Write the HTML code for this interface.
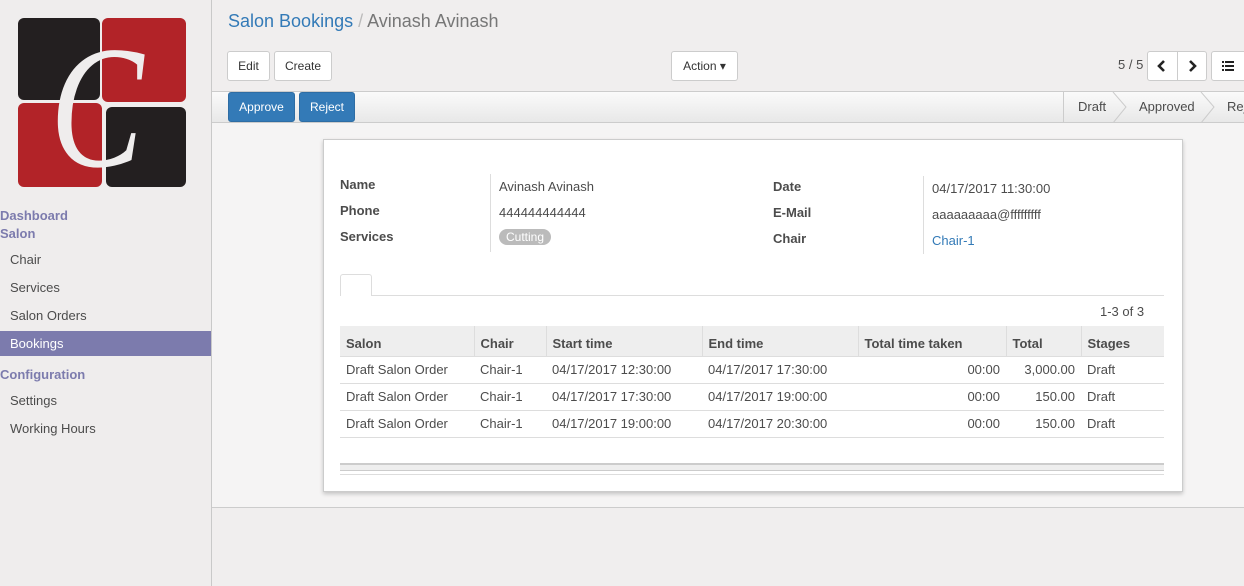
<!DOCTYPE html><html><head><style>
*{box-sizing:border-box;margin:0;padding:0}
body{width:1244px;height:586px;overflow:hidden;background:#f0eeee;font-family:"Liberation Sans",sans-serif;font-size:13px;color:#4c4c4c;position:relative}
.a{position:absolute}
.side{left:0;top:0;width:212px;height:586px;background:#efeded;border-right:1px solid #c9c9c9}
.cat{left:0;font-weight:bold;color:#7c7bad;font-size:13px}
.item{left:10px;color:#4c4c4c}
.btn{background:#fff;border:1px solid #ccc;border-radius:3px;height:30px;line-height:28px;text-align:center;font-size:12px;color:#333}
.bp{background:#337ab7;border:1px solid #2e6da4;color:#fff;border-radius:3px;height:30px;line-height:28px;text-align:center;font-size:12px}
.lbl{font-weight:bold;color:#4c4c4c}
table{border-collapse:collapse;font-size:13px}
td,th{text-align:left;padding:0 6px;height:27px;border-bottom:1px solid #ddd}
th{background:#eee;height:30px;padding-top:5px;border-left:1px solid #ddd}
th:first-child{border-left:0}
.r{text-align:right}
</style></head><body>
<div class="a side"></div>
<div class="a" style="left:18px;top:18px;width:82px;height:82px;background:#231f20;border-radius:6px"></div>
<div class="a" style="left:102px;top:18px;width:84px;height:84px;background:#b22328;border-radius:6px"></div>
<div class="a" style="left:18px;top:103px;width:84px;height:84px;background:#b22328;border-radius:6px"></div>
<div class="a" style="left:106px;top:107px;width:80px;height:80px;background:#231f20;border-radius:6px"></div>
<div class="a" style="left:50px;top:12px;font-family:'Liberation Serif',serif;font-style:italic;font-size:175px;line-height:190px;color:#efeded;transform:scaleX(0.8);transform-origin:left top">C</div>
<div class="a cat" style="top:208px">Dashboard</div>
<div class="a cat" style="top:226px">Salon</div>
<div class="a item" style="top:252px">Chair</div>
<div class="a item" style="top:280px">Services</div>
<div class="a item" style="top:308px">Salon Orders</div>
<div class="a" style="left:0;top:331px;width:211px;height:25px;background:#7c7bad"></div>
<div class="a item" style="top:336px;color:#fff">Bookings</div>
<div class="a cat" style="top:367px">Configuration</div>
<div class="a item" style="top:393px">Settings</div>
<div class="a item" style="top:421px">Working Hours</div>

<div class="a" style="left:228px;top:11px;font-size:18px;color:#337ab7">Salon Bookings<span style="color:#bbb"> / </span><span style="color:#777"> Avinash Avinash</span></div>
<div class="a btn" style="left:227px;top:51px;width:43px">Edit</div>
<div class="a btn" style="left:274px;top:51px;width:58px">Create</div>
<div class="a btn" style="left:671px;top:51px;width:67px">Action ▾</div>
<div class="a" style="left:1118px;top:57px;color:#4c4c4c">5 / 5</div>
<div class="a btn" style="left:1147px;top:51px;width:60px"></div>
<div class="a" style="left:1177px;top:52px;width:1px;height:28px;background:#ccc"></div>
<svg class="a" style="left:1155px;top:58px" width="14" height="16"><path d="M9 3L4 8L9 13" fill="none" stroke="#222" stroke-width="2.6"/></svg>
<svg class="a" style="left:1185px;top:58px" width="14" height="16"><path d="M5 3L10 8L5 13" fill="none" stroke="#222" stroke-width="2.6"/></svg>
<div class="a btn" style="left:1211px;top:51px;width:40px"></div>
<svg class="a" style="left:1222px;top:60px" width="14" height="12"><g fill="#222"><rect x="0" y="1" width="2" height="2"/><rect x="3" y="1" width="9" height="2"/><rect x="0" y="5" width="2" height="2"/><rect x="3" y="5" width="9" height="2"/><rect x="0" y="9" width="2" height="2"/><rect x="3" y="9" width="9" height="2"/></g></svg>

<div class="a" style="left:212px;top:91px;width:1032px;height:32px;background:linear-gradient(#fafafa,#e8e8e8);border-top:1px solid #ccc;border-bottom:1px solid #ccc"></div>
<div class="a bp" style="left:228px;top:92px;width:67px">Approve</div>
<div class="a bp" style="left:299px;top:92px;width:56px">Reject</div>
<div class="a" style="left:1063px;top:92px;width:1px;height:30px;background:#ccc"></div>
<div class="a" style="left:1078px;top:99px">Draft</div>
<div class="a" style="left:1139px;top:99px">Approved</div>
<div class="a" style="left:1227px;top:99px">Rej</div>
<svg class="a" style="left:1110px;top:92px" width="20" height="31"><path d="M3 0L16 15L3 31" fill="none" stroke="#ccc"/></svg>
<svg class="a" style="left:1198px;top:92px" width="20" height="31"><path d="M3 0L16 15L3 31" fill="none" stroke="#ccc"/></svg>

<div class="a" style="left:212px;top:123px;width:1032px;height:385px;background:#f5f4f4;border-bottom:1px solid #ccc"></div>
<div class="a" style="left:323px;top:139px;width:860px;height:353px;background:#fff;border:1px solid #ccc;box-shadow:0 2px 4px rgba(0,0,0,.2)"></div>
<div class="a lbl" style="left:340px;top:177px">Name</div>
<div class="a lbl" style="left:340px;top:203px">Phone</div>
<div class="a lbl" style="left:340px;top:229px">Services</div>
<div class="a" style="left:490px;top:174px;width:1px;height:78px;background:#ddd"></div>
<div class="a" style="left:499px;top:179px">Avinash Avinash</div>
<div class="a" style="left:499px;top:205px">444444444444</div>
<div class="a" style="left:499px;top:229px;background:#bbb;color:#fff;border-radius:9px;padding:1px 7px;font-size:12px">Cutting</div>
<div class="a lbl" style="left:773px;top:179px">Date</div>
<div class="a lbl" style="left:773px;top:205px">E-Mail</div>
<div class="a lbl" style="left:773px;top:231px">Chair</div>
<div class="a" style="left:923px;top:176px;width:1px;height:78px;background:#ddd"></div>
<div class="a" style="left:932px;top:181px">04/17/2017 11:30:00</div>
<div class="a" style="left:932px;top:207px">aaaaaaaaa@fffffffff</div>
<div class="a" style="left:932px;top:233px;color:#337ab7">Chair-1</div>
<div class="a" style="left:340px;top:295px;width:824px;height:1px;background:#ddd"></div>
<div class="a" style="left:340px;top:274px;width:32px;height:22px;background:#fff;border:1px solid #ddd;border-bottom:0;border-radius:3px 3px 0 0"></div>
<div class="a" style="left:1100px;top:304px">1-3 of 3</div>
<table class="a" style="left:340px;top:326px;width:824px">
<tr><th style="width:134px">Salon</th><th style="width:72px">Chair</th><th style="width:156px">Start time</th><th style="width:156px">End time</th><th style="width:148px">Total time taken</th><th style="width:75px">Total</th><th>Stages</th></tr>
<tr><td>Draft Salon Order</td><td>Chair-1</td><td>04/17/2017 12:30:00</td><td>04/17/2017 17:30:00</td><td class="r">00:00</td><td class="r">3,000.00</td><td>Draft</td></tr>
<tr><td>Draft Salon Order</td><td>Chair-1</td><td>04/17/2017 17:30:00</td><td>04/17/2017 19:00:00</td><td class="r">00:00</td><td class="r">150.00</td><td>Draft</td></tr>
<tr><td>Draft Salon Order</td><td>Chair-1</td><td>04/17/2017 19:00:00</td><td>04/17/2017 20:30:00</td><td class="r">00:00</td><td class="r">150.00</td><td>Draft</td></tr>
</table>
<div class="a" style="left:340px;top:463px;width:824px;height:8px;background:#eee;border-top:2px solid #ccc;border-bottom:1px solid #ccc"></div>
<div class="a" style="left:340px;top:474px;width:824px;height:1px;background:#ddd"></div>
</body></html>
